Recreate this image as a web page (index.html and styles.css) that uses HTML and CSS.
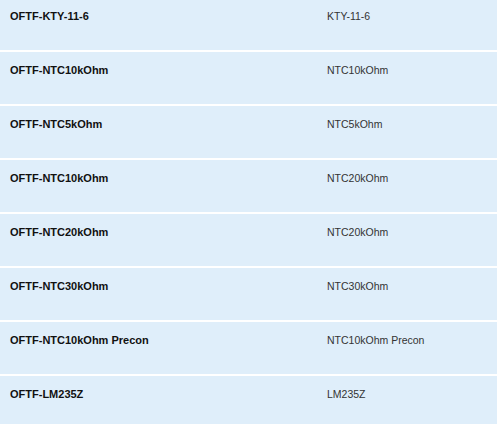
FILE: index.html
```html
<!DOCTYPE html>
<html>
<head>
<meta charset="utf-8">
<link rel="stylesheet" href="styles.css">
</head>
<body>
<div class="list">
  <div class="row"><div class="name">OFTF-KTY-11-6</div><div class="value">KTY-11-6</div></div>
  <div class="row"><div class="name">OFTF-NTC10kOhm</div><div class="value">NTC10kOhm</div></div>
  <div class="row"><div class="name">OFTF-NTC5kOhm</div><div class="value">NTC5kOhm</div></div>
  <div class="row"><div class="name">OFTF-NTC10kOhm</div><div class="value">NTC20kOhm</div></div>
  <div class="row"><div class="name">OFTF-NTC20kOhm</div><div class="value">NTC20kOhm</div></div>
  <div class="row"><div class="name">OFTF-NTC30kOhm</div><div class="value">NTC30kOhm</div></div>
  <div class="row"><div class="name">OFTF-NTC10kOhm Precon</div><div class="value">NTC10kOhm Precon</div></div>
  <div class="row"><div class="name">OFTF-LM235Z</div><div class="value">LM235Z</div></div>
</div>
</body>
</html>
```
FILE: styles.css
```css
html, body {
  margin: 0;
  padding: 0;
  background: #ffffff;
  overflow: hidden;
}
body {
  font-family: "Liberation Sans", Arial, sans-serif;
  font-size: 11px;
}
.list {
  display: flex;
  flex-direction: column;
  gap: 2px;
  margin-top: -2px;
}
.row {
  display: grid;
  grid-template-columns: 317px 1fr;
  height: 52px;
  box-sizing: border-box;
  background: #dfeefa;
}
.name, .value {
  padding: 12px 10px 0 10px;
  line-height: 13px;
}
.name {
  font-weight: bold;
  color: #111111;
}
.value {
  font-size: 10.5px;
  color: #333333;
}
```
